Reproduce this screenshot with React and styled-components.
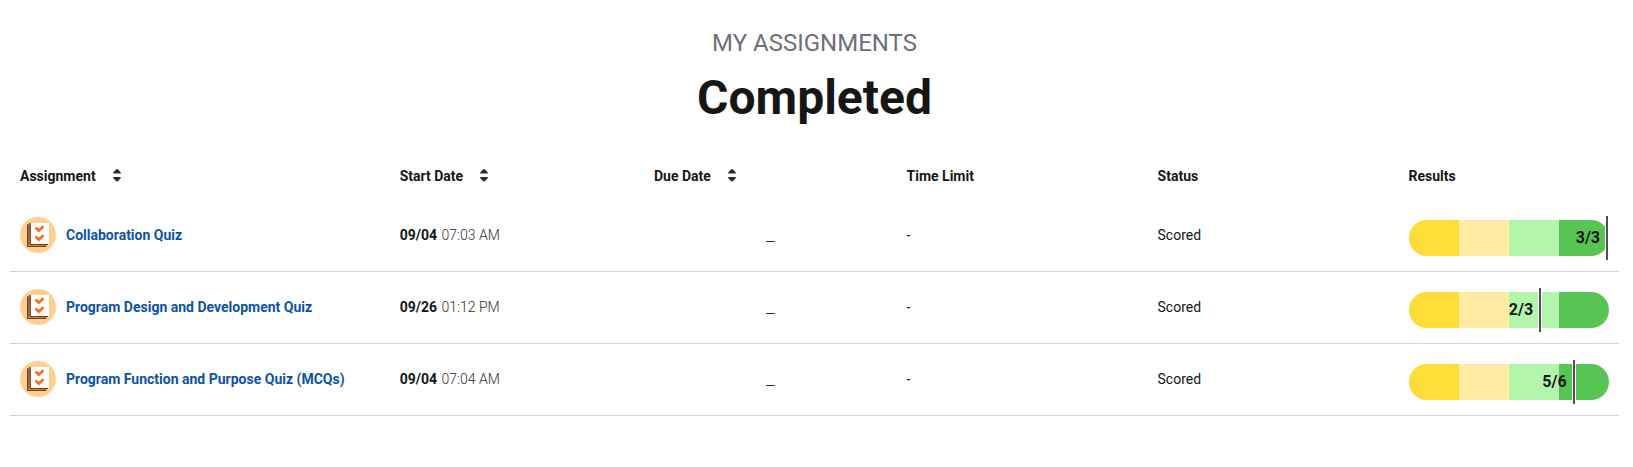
import React from "react";
import styled, { createGlobalStyle } from "styled-components";

const GlobalStyle = createGlobalStyle`
  * { box-sizing: border-box; }
  body {
    margin: 0;
    background: #fff;
    color: #161616;
    font-family: Roboto, "Liberation Sans", sans-serif;
    font-size: 14px;
    line-height: 20px;
  }
`;

const Page = styled.main`
  padding: 27px 14px 40px 10px;
`;

const Heading = styled.header`
  text-align: center;
`;

const Eyebrow = styled.p`
  margin: 0;
  color: #6f6f79;
  font-size: 24px;
  line-height: 32px;
  text-transform: uppercase;
`;

const Title = styled.h1`
  margin: 8px 0 0;
  font-size: 48px;
  font-weight: 700;
  line-height: 62px;
`;

const Table = styled.table`
  width: 100%;
  margin-top: 22px;
  border-spacing: 0;
  table-layout: fixed;
`;

const HeadCell = styled.th`
  width: ${({ $width }) => $width};
  height: 49px;
  padding: 0 10px;
  font-weight: 700;
  text-align: left;
  vertical-align: middle;
`;

const SortButton = styled.button`
  display: inline-flex;
  align-items: center;
  gap: 17px;
  padding: 0;
  border: 0;
  background: none;
  color: inherit;
  font: inherit;
  cursor: pointer;
`;

const Cell = styled.td`
  height: 72px;
  padding: 0 10px 2px;
  border-bottom: 1px solid #d1d1d1;
  text-align: ${({ $align }) => $align || "left"};
  white-space: nowrap;
`;

const Assignment = styled.div`
  display: flex;
  align-items: center;
  gap: 10px;
`;

const AssignmentLink = styled.a`
  color: #0b53a6;
  font-weight: 700;
  text-decoration: none;
`;

const Time = styled.span`
  margin-left: 1px;
  color: #30303c;
  font-weight: 300;
`;

const Empty = styled.span`
  color: #30303c;
  font-size: 20px;
  font-weight: 300;
`;

const Bar = styled.div`
  position: relative;
  display: flex;
  height: 36px;
  margin-top: 6px;
`;

const Band = styled.div`
  flex: 1;
  background: ${({ $color }) => $color};
  &:first-child { border-radius: 18px 0 0 18px; }
  &:nth-child(4) { border-radius: 0 18px 18px 0; }
`;

const Score = styled.div`
  position: absolute;
  top: -4px;
  bottom: -4px;
  left: 0;
  display: flex;
  align-items: center;
  justify-content: flex-end;
  gap: 5px;
  font-size: 16px;
  font-weight: 700;
`;

const Marker = styled.span`
  width: 4px;
  height: 100%;
  border: solid #fff;
  border-width: 0 1px;
  background: #50505a;
`;

const SortIcon = () => (
  <svg width="8" height="16" viewBox="0 0 8 16" fill="#2c2c2c" aria-hidden="true">
    <path d="M4 1 Q4.5 1 5 1.5L7.7 4.2V5.5H0.3V4.2L3 1.5Q3.5 1 4 1Z" />
    <path d="M4 13.5Q4.5 13.5 5 13L7.7 10.3V9H0.3V10.3L3 13Q3.5 13.5 4 13.5Z" />
  </svg>
);

const QuizIcon = () => (
  <svg width="36" height="36" viewBox="0 0 36 36" aria-hidden="true">
    <circle cx="18" cy="18" r="18" fill="#ffd092" />
    <path d="M7 7.5 10 6v21l-3 3Z" fill="#b5602a" />
    <path d="M7 30 10 27h18l-2 3Z" fill="#f17421" />
    <path d="M7.5 8v21.5H26" fill="none" stroke="#6b402a" strokeWidth="1" />
    <path d="M10 6h19v21H10Z" fill="#fff" />
    <path d="M10.5 6v21" fill="none" stroke="#6b625e" strokeWidth="1" />
    <path d="M10 27.5h18" fill="none" stroke="#6b402a" strokeWidth="1" />
    <path d="M15.5 10.6 18.8 13.6 23.5 9.3M15.5 19.6 18.8 22.6 23.5 18.3" fill="none" stroke="#f17421" strokeWidth="2.7" />
  </svg>
);

const COLUMNS = [
  { label: "Assignment", width: "23.6%", sortable: true },
  { label: "Start Date", width: "15.8%", sortable: true },
  { label: "Due Date", width: "15.7%", sortable: true },
  { label: "Time Limit", width: "15.6%" },
  { label: "Status", width: "15.6%" },
  { label: "Results", width: "220px" },
];

const BANDS = ["#ffdd38", "#ffeba1", "#b4f5ac", "#57c454"];

const ASSIGNMENTS = [
  { name: "Collaboration Quiz", date: "09/04", time: "07:03 AM", score: 3, total: 3 },
  { name: "Program Design and Development Quiz", date: "09/26", time: "01:12 PM", score: 2, total: 3 },
  { name: "Program Function and Purpose Quiz (MCQs)", date: "09/04", time: "07:04 AM", score: 5, total: 6 },
];

const ResultBar = ({ score, total }) => (
  <Bar>
    {BANDS.map((color) => (
      <Band key={color} $color={color} />
    ))}
    <Score style={{ width: `${(score / total) * 100}%` }}>
      <span>{score}/{total}</span>
      <Marker />
    </Score>
  </Bar>
);

export default function App() {
  return (
    <>
      <GlobalStyle />
      <Page>
        <Heading>
          <Eyebrow>My Assignments</Eyebrow>
          <Title>Completed</Title>
        </Heading>
        <Table>
          <thead>
            <tr>
              {COLUMNS.map(({ label, width, sortable }) => (
                <HeadCell key={label} scope="col" $width={width}>
                  {sortable ? (
                    <SortButton type="button">
                      {label}
                      <SortIcon />
                    </SortButton>
                  ) : (
                    label
                  )}
                </HeadCell>
              ))}
            </tr>
          </thead>
          <tbody>
            {ASSIGNMENTS.map((item) => (
              <tr key={item.name}>
                <Cell>
                  <Assignment>
                    <QuizIcon />
                    <AssignmentLink href="#">{item.name}</AssignmentLink>
                  </Assignment>
                </Cell>
                <Cell>
                  <b>{item.date}</b> <Time>{item.time}</Time>
                </Cell>
                <Cell $align="center">
                  <Empty>_</Empty>
                </Cell>
                <Cell>-</Cell>
                <Cell>Scored</Cell>
                <Cell>
                  <ResultBar score={item.score} total={item.total} />
                </Cell>
              </tr>
            ))}
          </tbody>
        </Table>
      </Page>
    </>
  );
}
